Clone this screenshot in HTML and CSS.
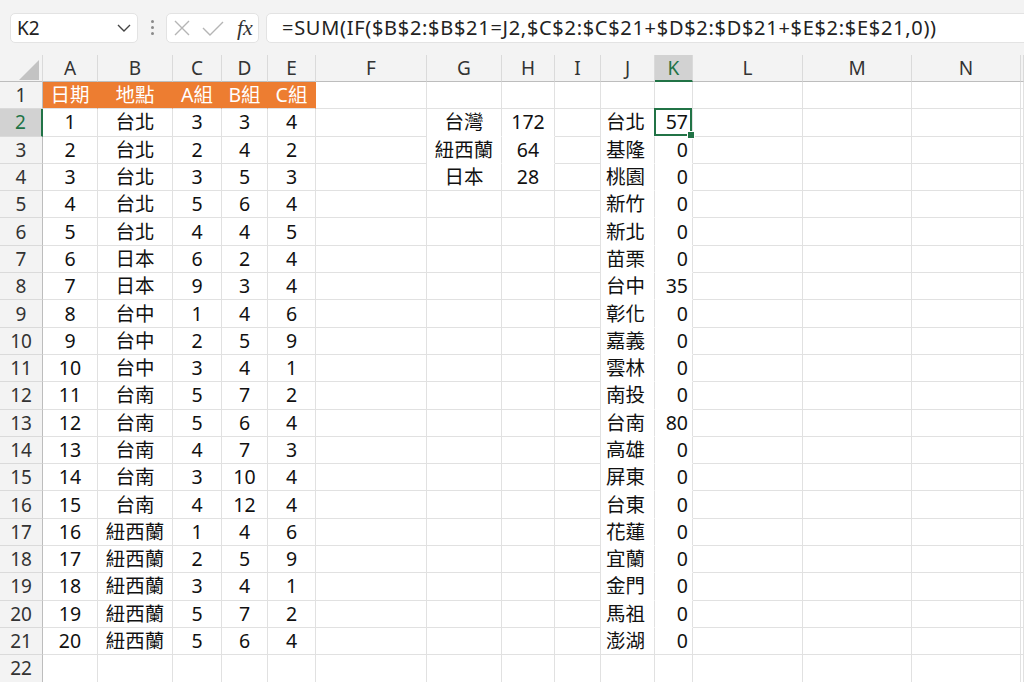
FILE: index.html
```html
<!DOCTYPE html>
<html lang="zh-TW">
<head>
  <meta charset="UTF-8"/>
  <title>活頁簿1 - Excel</title>
  <link rel="stylesheet" href="styles.css">
</head>
<body>

  <div class="bar">
    <div class="namebox">
      <span>K2</span>
      <svg width="14" height="8" viewBox="0 0 14 8"><polyline points="1,1 7,7 13,1" fill="none" stroke="#444" stroke-width="1.4"/></svg>
    </div>
    <div class="dots"><i></i><i></i><i></i></div>
    <div class="fnbox">
      <svg width="18" height="16" viewBox="0 0 18 16"><path d="M2 1 L16 15 M16 1 L2 15" stroke="#b5b5b5" stroke-width="1.4"/></svg>
      <svg width="22" height="16" viewBox="0 0 22 16"><polyline points="1,8 8,15 21,2" fill="none" stroke="#b5b5b5" stroke-width="1.4"/></svg>
      <span class="fx">fx</span>
    </div>
    <div class="formula">=SUM(IF($B$2:$B$21=J2,$C$2:$C$21+$D$2:$D$21+$E$2:$E$21,0))</div>
  </div>

  <table class="sheet">
    <colgroup>
      <col style="width:43px"><col style="width:55px"><col style="width:75px"><col style="width:49px"><col style="width:46px"><col style="width:48px">
      <col style="width:111px"><col style="width:75px"><col style="width:53px"><col style="width:46px"><col style="width:54px"><col style="width:38px">
      <col style="width:110px"><col style="width:109px"><col style="width:109px"><col style="width:3px">
    </colgroup>
    <thead>
      <tr>
        <th class="corner"><svg width="22" height="22" viewBox="0 0 22 22"><polygon points="21,1 21,21 1,21" fill="#c3c3c3"/></svg></th>
        <th>A</th><th>B</th><th>C</th><th>D</th><th>E</th><th>F</th><th>G</th><th>H</th><th>I</th><th>J</th><th class="on">K</th><th>L</th><th>M</th><th>N</th><th></th>
      </tr>
    </thead>
    <tbody>
      <tr><th>1</th><td class="hd">日期</td><td class="hd">地點</td><td class="hd">A組</td><td class="hd">B組</td><td class="hd">C組</td><td></td><td></td><td></td><td></td><td></td><td></td><td></td><td></td><td></td><td></td></tr>
      <tr><th class="on">2</th><td>1</td><td>台北</td><td>3</td><td>3</td><td>4</td><td></td><td class="w">台灣</td><td class="w">172</td><td></td><td class="w l">台北</td><td class="w r sel">57</td><td></td><td></td><td></td><td></td></tr>
      <tr><th>3</th><td>2</td><td>台北</td><td>2</td><td>4</td><td>2</td><td></td><td class="w">紐西蘭</td><td class="w">64</td><td></td><td class="w l">基隆</td><td class="w r">0</td><td></td><td></td><td></td><td></td></tr>
      <tr><th>4</th><td>3</td><td>台北</td><td>3</td><td>5</td><td>3</td><td></td><td>日本</td><td>28</td><td></td><td class="w l">桃園</td><td class="w r">0</td><td></td><td></td><td></td><td></td></tr>
      <tr><th>5</th><td>4</td><td>台北</td><td>5</td><td>6</td><td>4</td><td></td><td></td><td></td><td></td><td class="w l">新竹</td><td class="w r">0</td><td></td><td></td><td></td><td></td></tr>
      <tr><th>6</th><td>5</td><td>台北</td><td>4</td><td>4</td><td>5</td><td></td><td></td><td></td><td></td><td class="w l">新北</td><td class="w r">0</td><td></td><td></td><td></td><td></td></tr>
      <tr><th>7</th><td>6</td><td>日本</td><td>6</td><td>2</td><td>4</td><td></td><td></td><td></td><td></td><td class="w l">苗栗</td><td class="w r">0</td><td></td><td></td><td></td><td></td></tr>
      <tr><th>8</th><td>7</td><td>日本</td><td>9</td><td>3</td><td>4</td><td></td><td></td><td></td><td></td><td class="w l">台中</td><td class="w r">35</td><td></td><td></td><td></td><td></td></tr>
      <tr><th>9</th><td>8</td><td>台中</td><td>1</td><td>4</td><td>6</td><td></td><td></td><td></td><td></td><td class="w l">彰化</td><td class="w r">0</td><td></td><td></td><td></td><td></td></tr>
      <tr><th>10</th><td>9</td><td>台中</td><td>2</td><td>5</td><td>9</td><td></td><td></td><td></td><td></td><td class="w l">嘉義</td><td class="w r">0</td><td></td><td></td><td></td><td></td></tr>
      <tr><th>11</th><td>10</td><td>台中</td><td>3</td><td>4</td><td>1</td><td></td><td></td><td></td><td></td><td class="w l">雲林</td><td class="w r">0</td><td></td><td></td><td></td><td></td></tr>
      <tr><th>12</th><td>11</td><td>台南</td><td>5</td><td>7</td><td>2</td><td></td><td></td><td></td><td></td><td class="w l">南投</td><td class="w r">0</td><td></td><td></td><td></td><td></td></tr>
      <tr><th>13</th><td>12</td><td>台南</td><td>5</td><td>6</td><td>4</td><td></td><td></td><td></td><td></td><td class="w l">台南</td><td class="w r">80</td><td></td><td></td><td></td><td></td></tr>
      <tr><th>14</th><td>13</td><td>台南</td><td>4</td><td>7</td><td>3</td><td></td><td></td><td></td><td></td><td class="w l">高雄</td><td class="w r">0</td><td></td><td></td><td></td><td></td></tr>
      <tr><th>15</th><td>14</td><td>台南</td><td>3</td><td>10</td><td>4</td><td></td><td></td><td></td><td></td><td class="w l">屏東</td><td class="w r">0</td><td></td><td></td><td></td><td></td></tr>
      <tr><th>16</th><td>15</td><td>台南</td><td>4</td><td>12</td><td>4</td><td></td><td></td><td></td><td></td><td class="w l">台東</td><td class="w r">0</td><td></td><td></td><td></td><td></td></tr>
      <tr><th>17</th><td>16</td><td>紐西蘭</td><td>1</td><td>4</td><td>6</td><td></td><td></td><td></td><td></td><td class="w l">花蓮</td><td class="w r">0</td><td></td><td></td><td></td><td></td></tr>
      <tr><th>18</th><td>17</td><td>紐西蘭</td><td>2</td><td>5</td><td>9</td><td></td><td></td><td></td><td></td><td class="w l">宜蘭</td><td class="w r">0</td><td></td><td></td><td></td><td></td></tr>
      <tr><th>19</th><td>18</td><td>紐西蘭</td><td>3</td><td>4</td><td>1</td><td></td><td></td><td></td><td></td><td class="w l">金門</td><td class="w r">0</td><td></td><td></td><td></td><td></td></tr>
      <tr><th>20</th><td>19</td><td>紐西蘭</td><td>5</td><td>7</td><td>2</td><td></td><td></td><td></td><td></td><td class="w l">馬祖</td><td class="w r">0</td><td></td><td></td><td></td><td></td></tr>
      <tr><th>21</th><td>20</td><td>紐西蘭</td><td>5</td><td>6</td><td>4</td><td></td><td></td><td></td><td></td><td class="l">澎湖</td><td class="r">0</td><td></td><td></td><td></td><td></td></tr>
      <tr><th>22</th><td></td><td></td><td></td><td></td><td></td><td></td><td></td><td></td><td></td><td></td><td></td><td></td><td></td><td></td><td></td></tr>
    </tbody>
  </table>

</body>
</html>
```
FILE: styles.css
```css
*{box-sizing:border-box;margin:0;padding:0}
body{background:#fff;width:1024px;height:682px;overflow:hidden;font-family:"Noto Sans","Noto Sans CJK TC",sans-serif;color:#111}

/* formula bar */
.bar{height:55px;background:#f3f3f3;display:flex;align-items:center;padding-left:10px;overflow:hidden}
.namebox{width:128px;height:30px;background:#fff;border:1px solid #e3e3e3;border-radius:5px;display:flex;align-items:center;justify-content:space-between;padding:0 6px 0 6px;font-size:19px;color:#222}
.dots{width:28px;display:flex;flex-direction:column;align-items:center;gap:3px}
.dots i{width:3px;height:3px;border-radius:50%;background:#8a8a8a}
.fnbox{width:93px;height:30px;background:#fff;border:1px solid #e3e3e3;border-radius:5px;display:flex;align-items:center;padding-left:6px;gap:11px}
.fx{font-family:"Liberation Serif",serif;font-style:italic;font-size:22px;color:#333;margin-left:2px}
.formula{flex:1;height:30px;margin-left:7px;margin-right:-12px;background:#fff;border:1px solid #e3e3e3;border-radius:5px;padding-left:15px;font-size:20px;letter-spacing:0.7px;line-height:28px;color:#222;white-space:nowrap;overflow:hidden}

/* grid */
.sheet{border-collapse:separate;border-spacing:0;table-layout:fixed;width:1024px;font-size:19.5px;line-height:22px}
.sheet tr{height:27.3px}
.sheet thead tr{height:27px}
.sheet td{border-right:1px solid #e1e1e1;border-bottom:1px solid #e1e1e1;text-align:center;white-space:nowrap;overflow:hidden;padding:0}
.sheet th{background:#f3f3f3;font-weight:normal;font-size:19px;color:#333;border-right:1px solid #dadada;border-bottom:1px solid #dadada;overflow:hidden}
.sheet thead th{border-bottom:1px solid #bdbdbd}
.sheet tbody th{border-right:1px solid #bdbdbd}
.sheet th.corner{padding:4px 2px 0 0;text-align:right;vertical-align:top}
.sheet th.corner svg{display:block;margin-left:auto}
.sheet th.on{background:#d2d2d2;color:#217346}
.sheet thead th.on{border-bottom:2px solid #217346}
.sheet tbody th.on{border-right:2px solid #217346}
.sheet td.hd{background:#ed7d31;color:#fff;border-right-color:#ed7d31}
.sheet td.w{border-bottom-color:#fff}
.sheet td.l{text-align:left;padding-left:5px}
.sheet td.r{text-align:right;padding-right:4px}
.sheet td.sel{position:relative;overflow:visible}
.sheet td.sel::after{content:"";position:absolute;left:-1px;top:-1px;right:0;bottom:0;border:2px solid #217346}
.sheet td.sel::before{content:"";position:absolute;right:-3px;bottom:-3px;width:6px;height:6px;background:#217346;border:1px solid #fff;z-index:2}
```
